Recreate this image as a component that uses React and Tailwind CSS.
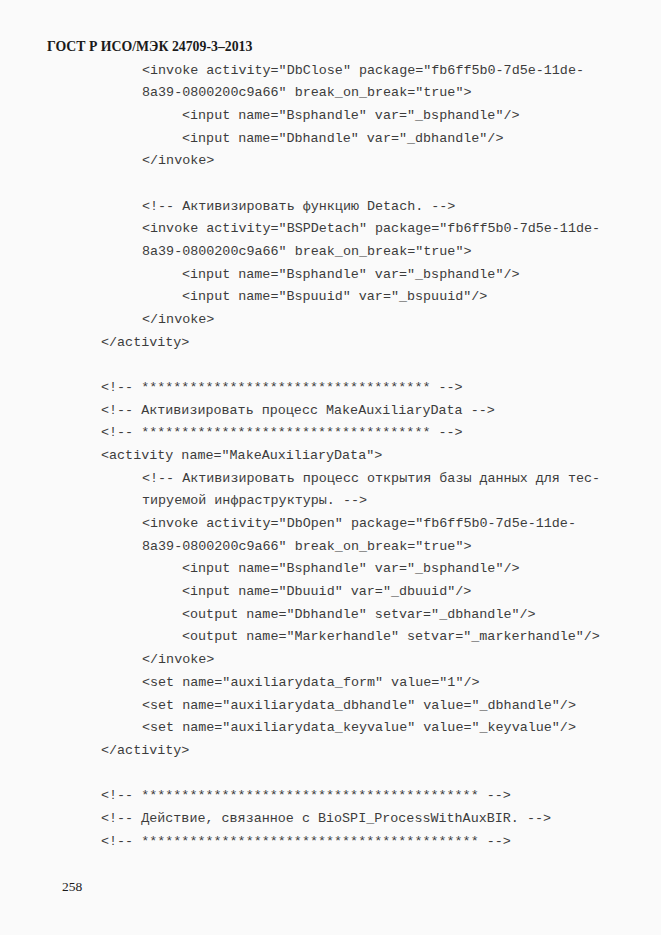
import React from "react";

const L = [
  [2, '<invoke activity="DbClose" package="fb6ff5b0-7d5e-11de-'],
  [2, '8a39-0800200c9a66" break_on_break="true">'],
  [3, '<input name="Bsphandle" var="_bsphandle"/>'],
  [3, '<input name="Dbhandle" var="_dbhandle"/>'],
  [2, '</invoke>'],
  [0, ''],
  [2, '<!-- Активизировать функцию Detach. -->'],
  [2, '<invoke activity="BSPDetach" package="fb6ff5b0-7d5e-11de-'],
  [2, '8a39-0800200c9a66" break_on_break="true">'],
  [3, '<input name="Bsphandle" var="_bsphandle"/>'],
  [3, '<input name="Bspuuid" var="_bspuuid"/>'],
  [2, '</invoke>'],
  [1, '</activity>'],
  [0, ''],
  [1, '<!-- ************************************ -->'],
  [1, '<!-- Активизировать процесс MakeAuxiliaryData -->'],
  [1, '<!-- ************************************ -->'],
  [1, '<activity name="MakeAuxiliaryData">'],
  [2, '<!-- Активизировать процесс открытия базы данных для тес-'],
  [2, 'тируемой инфраструктуры. -->'],
  [2, '<invoke activity="DbOpen" package="fb6ff5b0-7d5e-11de-'],
  [2, '8a39-0800200c9a66" break_on_break="true">'],
  [3, '<input name="Bsphandle" var="_bsphandle"/>'],
  [3, '<input name="Dbuuid" var="_dbuuid"/>'],
  [3, '<output name="Dbhandle" setvar="_dbhandle"/>'],
  [3, '<output name="Markerhandle" setvar="_markerhandle"/>'],
  [2, '</invoke>'],
  [2, '<set name="auxiliarydata_form" value="1"/>'],
  [2, '<set name="auxiliarydata_dbhandle" value="_dbhandle"/>'],
  [2, '<set name="auxiliarydata_keyvalue" value="_keyvalue"/>'],
  [1, '</activity>'],
  [0, ''],
  [1, '<!-- ****************************************** -->'],
  [1, '<!-- Действие, связанное с BioSPI_ProcessWithAuxBIR. -->'],
  [1, '<!-- ****************************************** -->'],
];

const indent = ["pl-0", "pl-0", "pl-[41px]", "pl-[81px]"];

export default function App() {
  return (
    <div className="w-[661px] h-[935px] bg-[#fafafa] flex flex-col overflow-hidden">
      <div className="pt-[38px] pl-[47px] text-[13.8px] leading-[18px] font-bold text-[#1a1a1a] font-['Liberation_Serif',serif]">
        ГОСТ Р ИСО/МЭК 24709-3–2013
      </div>
      <div className="pl-[101px] mt-[3.7px] flex flex-col text-[13.4px] leading-[22.68px] text-[#3c3c3c] font-['Liberation_Mono',monospace]">
        {L.map(([lvl, t], i) => (
          <div key={i} className={`whitespace-pre h-[22.68px] ${indent[lvl]}`}>
            {t}
          </div>
        ))}
      </div>
      <div className="mt-auto pb-[39px] pl-[62px] text-[13.5px] leading-[18px] text-[#1a1a1a] font-['Liberation_Serif',serif]">
        258
      </div>
    </div>
  );
}
